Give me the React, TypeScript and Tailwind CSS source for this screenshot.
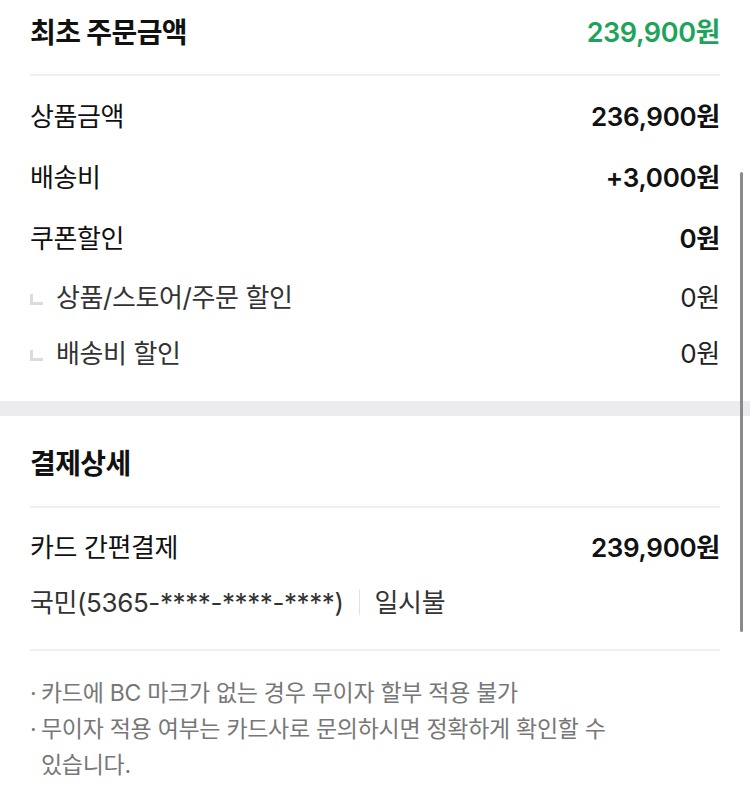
const FONT = "font-['Inter','Noto_Sans_CJK_KR',sans-serif]";

function Row({ label, value, sub, bold }: { label: string; value: string; sub?: boolean; bold?: boolean }) {
  return (
    <div className={`flex items-center justify-between ${sub ? "h-[56px]" : "h-[61px]"}`}>
      <div className="flex items-center">
        {sub && <span className="mr-[13px] mt-[4px] inline-block h-[11px] w-[13px] border-b-[3px] border-l-[3px] border-[#dcdcdc]" />}
        <span className={`text-[26px] tracking-[-0.4px] ${sub ? "text-[#333]" : "text-[#111]"}`}>{label}</span>
      </div>
      <span className={`text-[26px] tracking-[-0.3px] ${bold ? "font-semibold text-[#111]" : "text-[#222]"}`}>{value}</span>
    </div>
  );
}

export default function App() {
  return (
    <div className={`relative min-h-[793px] w-[750px] overflow-hidden bg-white ${FONT}`}>
      {/* 최초 주문금액 */}
      <section className="px-[30px]">
        <div className="flex h-[66px] items-center justify-between">
          <h2 className="text-[28px] font-bold tracking-[-0.6px] text-[#111]">최초 주문금액</h2>
          <span className="text-[27px] font-semibold tracking-[-0.4px] text-[#1ea45a]">239,900원</span>
        </div>
        <div className="mt-[8px] border-t-2 border-[#efefef]" />
        <div className="pt-[10px]">
          <Row label="상품금액" value="236,900원" bold />
          <Row label="배송비" value="+3,000원" bold />
          <Row label="쿠폰할인" value="0원" bold />
          <Row label="상품/스토어/주문 할인" value="0원" sub />
          <Row label="배송비 할인" value="0원" sub />
        </div>
      </section>

      {/* 구분 띠 */}
      <div className="mt-[20px] h-[15px] bg-[#ececef]" />

      {/* 결제상세 */}
      <section className="px-[30px] pt-[15px]">
        <div className="flex h-[66px] items-center">
          <h2 className="text-[28px] font-bold tracking-[-0.6px] text-[#111]">결제상세</h2>
        </div>
        <div className="mt-[9px] border-t-2 border-[#efefef]" />
        <div className="mt-[9px] flex h-[60px] items-center justify-between">
          <span className="text-[26px] tracking-[-0.4px] text-[#111]">카드 간편결제</span>
          <span className="text-[26px] font-semibold tracking-[-0.3px] text-[#111]">239,900원</span>
        </div>
        <div className="flex h-[50px] items-center text-[26px] tracking-[-0.4px] text-[#333]">
          <span>국민(5365-****-****-****)</span>
          <span className="mx-[15px] h-[26px] w-px bg-[#e2e2e2]" />
          <span>일시불</span>
        </div>
        <div className="mt-[22px] border-t-2 border-[#efefef]" />
        <ul className="break-keep pt-[24px] text-[23px] leading-[36px] tracking-[-0.3px] text-[#777]">
          <li className="flex">
            <span className="w-[11px] shrink-0">·</span>
            <span>카드에 BC 마크가 없는 경우 무이자 할부 적용 불가</span>
          </li>
          <li className="flex">
            <span className="w-[11px] shrink-0">·</span>
            <span className="max-w-[600px]">무이자 적용 여부는 카드사로 문의하시면 정확하게 확인할 수 있습니다.</span>
          </li>
        </ul>
      </section>

      {/* 스크롤 표시 */}
      <div className="absolute right-[7px] top-[172px] h-[460px] w-[3px] rounded-full bg-[#8a8a8a]" />
    </div>
  );
}
